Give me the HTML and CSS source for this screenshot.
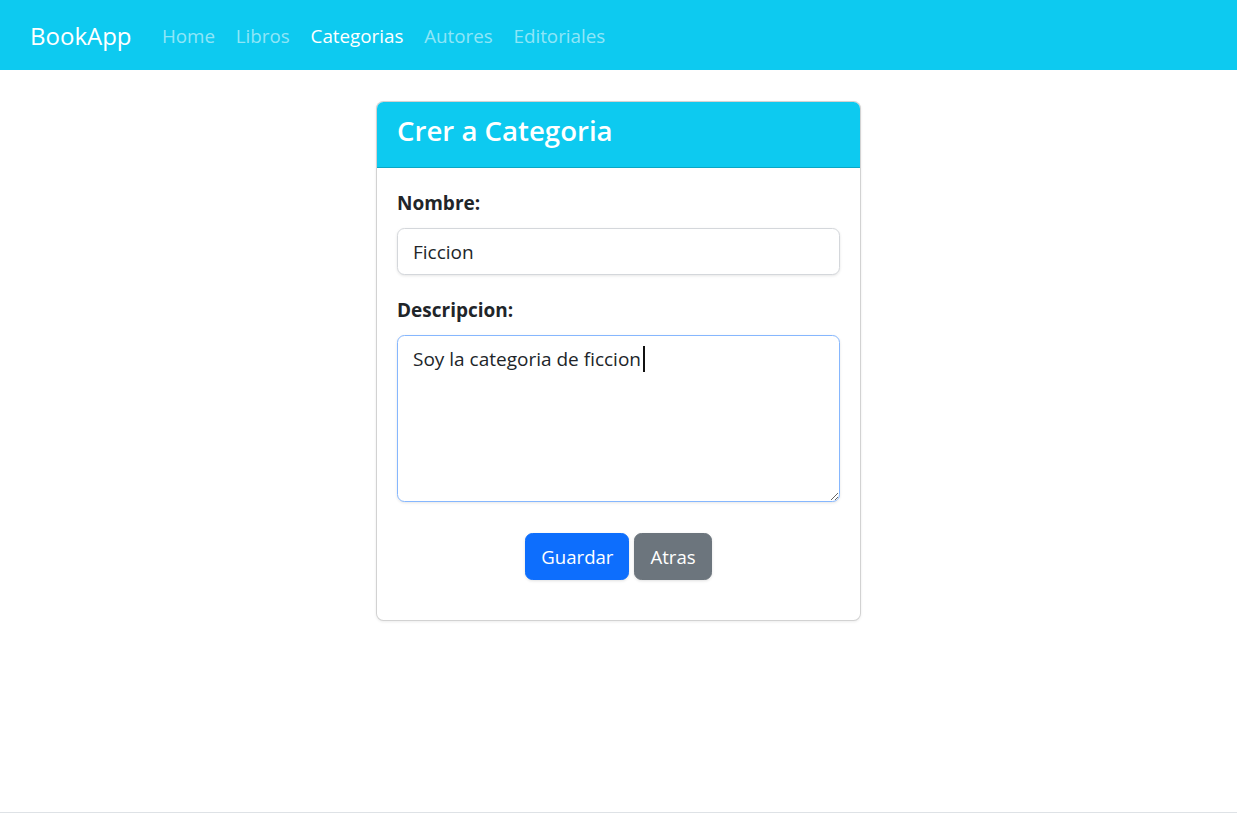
FILE: index.html
```html
<!DOCTYPE html>
<html lang="es">
<head>
<meta charset="utf-8">
<title>BookApp</title>
<link rel="stylesheet" href="styles.css">
</head>
<body>
<nav class="navbar">
  <a class="brand" href="#">BookApp</a>
  <ul class="nav">
    <li><a class="nav-link" href="#">Home</a></li>
    <li><a class="nav-link" href="#">Libros</a></li>
    <li><a class="nav-link active" href="#">Categorias</a></li>
    <li><a class="nav-link" href="#">Autores</a></li>
    <li><a class="nav-link" href="#">Editoriales</a></li>
  </ul>
</nav>
<main class="main">
  <div class="card">
    <div class="card-header">
      <h3 class="card-title">Crer a Categoria</h3>
    </div>
    <form class="card-body">
      <div class="field">
        <label class="label" for="nombre">Nombre:</label>
        <input class="control" id="nombre" type="text" value="Ficcion">
      </div>
      <div class="field">
        <label class="label" for="desc">Descripcion:</label>
        <div class="textarea-wrap">
          <textarea class="control textarea focused" id="desc" rows="5">Soy la categoria de ficcion</textarea>
          <span class="caret"></span>
        </div>
      </div>
      <div class="actions">
        <button class="btn btn-primary" type="button">Guardar</button>
        <button class="btn btn-secondary" type="button">Atras</button>
      </div>
    </form>
  </div>
</main>
<footer class="footer"></footer>
</body>
</html>
```
FILE: styles.css
```css
* { box-sizing: border-box; }
html, body { margin: 0; padding: 0; }
body {
  font-family: "Open Sans", "Noto Sans", sans-serif;
  font-size: 19px;
  line-height: 1.5;
  color: #212529;
  background: #fff;
  min-height: 100vh;
  display: flex;
  flex-direction: column;
}
.navbar {
  background: #0dcaf0;
  height: 70px;
  display: flex;
  align-items: center;
  padding: 2px 30px 0;
}
.brand {
  font-size: 24px;
  color: #fff;
  text-decoration: none;
  margin-right: 20px;
  line-height: 1.5;
}
.nav {
  list-style: none;
  margin: 0;
  padding: 0;
  display: flex;
}
.nav-link {
  display: block;
  padding: 10px 10.4px;
  font-size: 18.8px;
  color: rgba(255,255,255,.55);
  text-decoration: none;
}
.nav-link.active { color: #fff; }
.main {
  padding-top: 31px;
  display: flex;
  justify-content: center;
}
.card {
  width: 485px;
  border: 1px solid rgba(0,0,0,.175);
  border-radius: 7.5px;
  background: #fff;
  box-shadow: 0 1px 3px rgba(0,0,0,.08);
  overflow: hidden;
}
.card-header {
  background: #0dcaf0;
  border-bottom: 1px solid rgba(0,0,0,.175);
  padding: 10px 20px;
  height: 66px;
}
.card-title {
  margin: 0;
  font-size: 27.6px;
  font-weight: 600;
  color: #fff;
  line-height: 37px;
}
.card-body {
  padding: 20px 20px 40px;
  margin: 0;
}
.field { margin-bottom: 20px; }
.label {
  display: block;
  font-weight: 700;
  margin-bottom: 10px;
  line-height: 30px;
}
.control {
  display: block;
  width: 100%;
  font: inherit;
  color: #212529;
  padding: 7.5px 15px;
  line-height: 30px;
  border: 1px solid #d4d7db;
  border-radius: 7.5px;
  background: #fff;
  box-shadow: 0 1px 3px rgba(0,0,0,.1);
  outline: none;
}
.textarea-wrap { position: relative; }
.textarea {
  height: 167px;
  resize: vertical;
}
.textarea.focused,
.textarea:focus {
  border-color: #86b7fe;
}
.caret {
  position: absolute;
  left: 246px;
  top: 11px;
  width: 2px;
  height: 26px;
  background: #111;
}
.actions {
  display: flex;
  justify-content: center;
  gap: 5px;
  padding-top: 11px;
}
.btn {
  font-family: inherit;
  font-size: 18.6px;
  line-height: 30px;
  padding: 7.5px 15px;
  border: 1px solid transparent;
  border-radius: 7.5px;
  color: #fff;
  cursor: pointer;
  box-shadow: 0 1px 3px rgba(0,0,0,.12);
}
.btn-primary { background: #0d6efd; border-color: #0d6efd; }
.btn-secondary { background: #6c757d; border-color: #6c757d; }
.footer {
  margin-top: auto;
  height: 21px;
  border-top: 1px solid #dee2e6;
  background: #fff;
}
```
